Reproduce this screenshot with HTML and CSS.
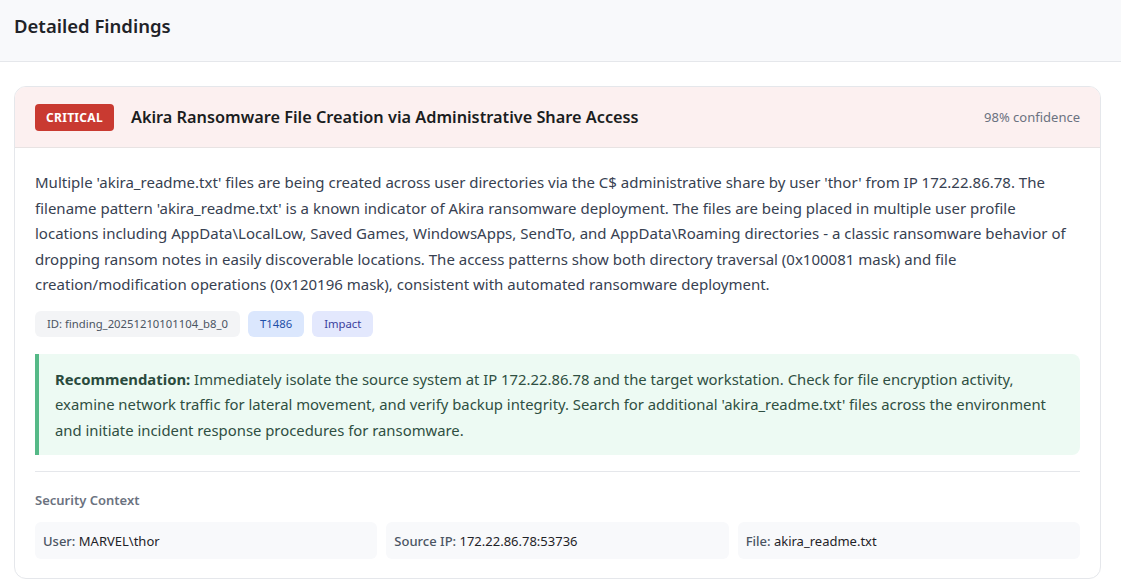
FILE: index.html
```html
<!DOCTYPE html>
<html lang="en">
<head>
  <meta charset="UTF-8" />
  <meta name="viewport" content="width=device-width, initial-scale=1.0" />
  <title>Detailed Findings</title>
  <link rel="stylesheet" href="styles.css">
</head>
<body>
  <div class="section-header">
    <h2>Detailed Findings</h2>
  </div>

  <div class="findings">
    <div class="finding-card">
      <div class="finding-head">
        <span class="severity critical">CRITICAL</span>
        <h3 class="finding-title">Akira Ransomware File Creation via Administrative Share Access</h3>
        <span class="confidence">98% confidence</span>
      </div>

      <div class="finding-body">
        <p class="description">
          Multiple 'akira_readme.txt' files are being created across user directories via the C$ administrative share by user 'thor' from IP 172.22.86.78. The filename pattern 'akira_readme.txt' is a known indicator of Akira ransomware deployment. The files are being placed in multiple user profile locations including AppData\LocalLow, Saved Games, WindowsApps, SendTo, and AppData\Roaming directories - a classic ransomware behavior of dropping ransom notes in easily discoverable locations. The access patterns show both directory traversal (0x100081 mask) and file creation/modification operations (0x120196 mask), consistent with automated ransomware deployment.
        </p>

        <div class="tags">
          <span class="tag tag-id">ID: finding_20251210101104_b8_0</span>
          <span class="tag tag-technique">T1486</span>
          <span class="tag tag-tactic">Impact</span>
        </div>

        <div class="recommendation">
          <p><strong>Recommendation:</strong> Immediately isolate the source system at IP 172.22.86.78 and the target workstation. Check for file encryption activity, examine network traffic for lateral movement, and verify backup integrity. Search for additional 'akira_readme.txt' files across the environment and initiate incident response procedures for ransomware.</p>
        </div>

        <div class="context">
          <div class="context-label">Security Context</div>
          <div class="context-grid">
            <div class="context-item"><span class="key">User:</span> MARVEL\thor</div>
            <div class="context-item"><span class="key">Source IP:</span> 172.22.86.78:53736</div>
            <div class="context-item"><span class="key">File:</span> akira_readme.txt</div>
          </div>
        </div>
      </div>
    </div>
  </div>
</body>
</html>
```

FILE: styles.css
```css
body {
  margin: 0;
  font-family: 'Segoe UI', 'Noto Sans', sans-serif;
  background: #fff;
  color: #374151;
}

.section-header {
  background: #f8f9fb;
  border-bottom: 1px solid #e5e7eb;
  padding: 0 14px;
  height: 61px;
  display: flex;
  align-items: center;
}

.section-header h2 {
  margin: 0 0 10px;
  font-size: 18.5px;
  font-weight: 600;
  color: #1f2328;
}

.findings {
  padding: 24px 20px 0 14px;
}

.finding-card {
  border: 1px solid #e5e7eb;
  border-radius: 12px;
  overflow: hidden;
}

.finding-head {
  display: flex;
  align-items: center;
  gap: 17px;
  background: #fcf0f0;
  border-bottom: 1px solid #e8e3e3;
  padding: 0 20px;
  height: 60px;
}

.severity {
  display: inline-block;
  padding: 5px 11px;
  border-radius: 4px;
  font-size: 12px;
  font-weight: 700;
  letter-spacing: 0.3px;
  color: #fff;
}

.critical {
  background: #c93a31;
}

.finding-title {
  flex: 1;
  margin: 0;
  font-size: 16.3px;
  font-weight: 600;
  color: #1a1d21;
}

.confidence {
  font-size: 13px;
  color: #6b7280;
}

.finding-body {
  padding: 22px 20px 19px;
}

.description {
  margin: 0;
  font-size: 15px;
  line-height: 25.5px;
  color: #374151;
}

.tags {
  display: flex;
  gap: 8px;
  margin-top: 13px;
}

.tag {
  padding: 5px 12px;
  border-radius: 6px;
  font-size: 11.3px;
  line-height: 16px;
}

.tag-id {
  background: #f3f4f6;
  color: #4b5563;
}

.tag-technique {
  background: #dbe7fd;
  color: #1e4fa8;
}

.tag-tactic {
  background: #e3e8fd;
  color: #3b3f9e;
}

.recommendation {
  margin-top: 17px;
  background: #edfaf3;
  border-left: 4px solid #55b987;
  border-radius: 0 8px 8px 0;
  padding: 13px 20px 12px 16px;
  font-size: 14.85px;
  line-height: 25.5px;
  color: #2f4f42;
}

.recommendation p {
  margin: 0;
}

.recommendation strong {
  color: #2a4a3d;
}

.context {
  margin-top: 16px;
  border-top: 1px solid #e5e7eb;
  padding-top: 19px;
}

.context-label {
  font-size: 13px;
  font-weight: 600;
  color: #6b7280;
}

.context-grid {
  display: grid;
  grid-template-columns: repeat(3, 1fr);
  gap: 9px;
  margin-top: 13px;
}

.context-item {
  background: #f8f9fb;
  border-radius: 6px;
  padding: 10px 8px 9px;
  font-size: 13px;
  color: #1f2328;
}

.context-item .key {
  color: #4b5563;
  font-weight: 500;
}
```
